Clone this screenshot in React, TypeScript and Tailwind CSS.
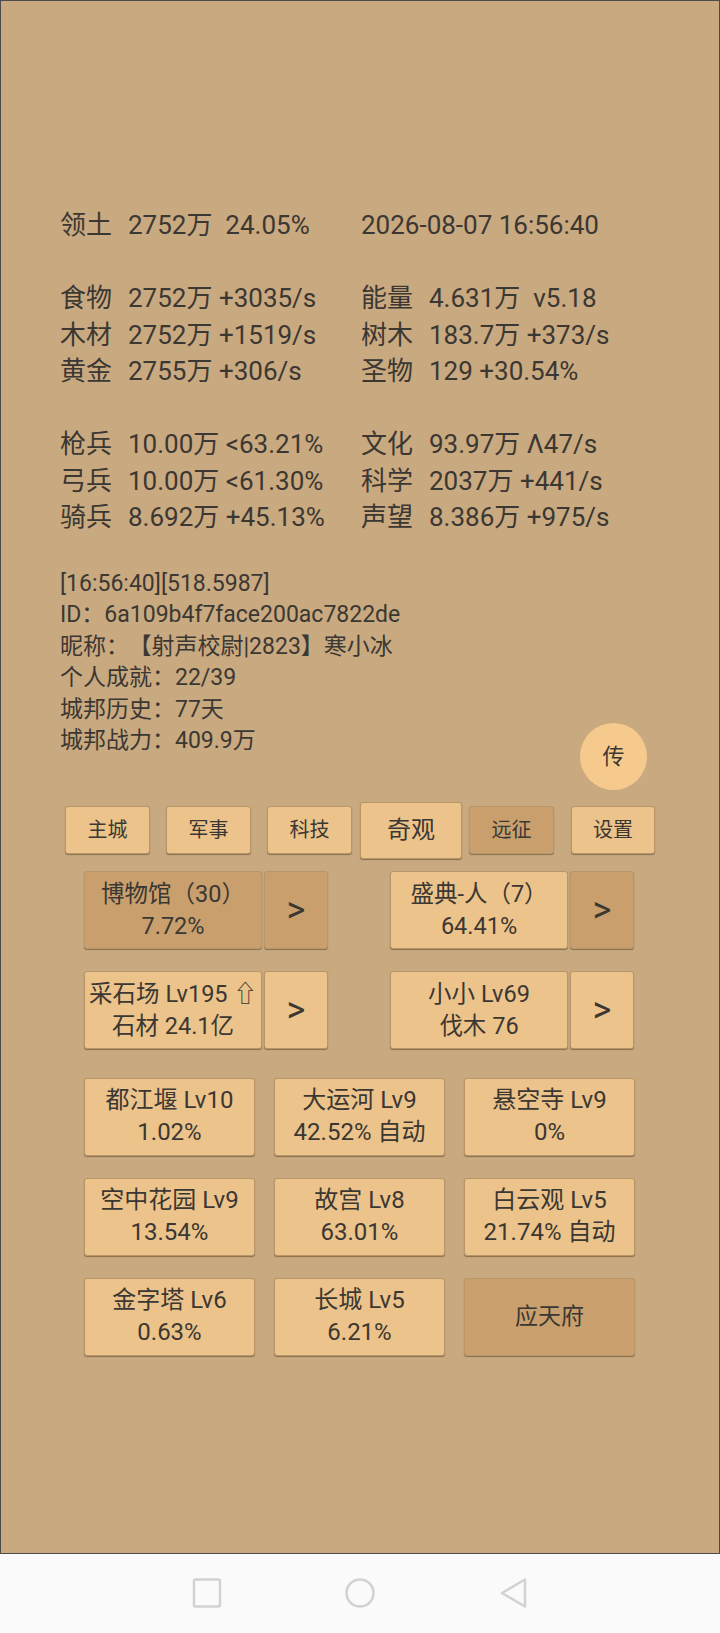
const stats: ([string, string, string, string] | null)[] = [
  ['领土', '2752万  24.05%', '', '2026-08-07 16:56:40'],
  null,
  ['食物', '2752万 +3035/s', '能量', '4.631万  v5.18'],
  ['木材', '2752万 +1519/s', '树木', '183.7万 +373/s'],
  ['黄金', '2755万 +306/s', '圣物', '129 +30.54%'],
  null,
  ['枪兵', '10.00万 <63.21%', '文化', '93.97万 Λ47/s'],
  ['弓兵', '10.00万 <61.30%', '科学', '2037万 +441/s'],
  ['骑兵', '8.692万 +45.13%', '声望', '8.386万 +975/s'],
];

const wonders: { title: string; sub?: string; dark?: boolean }[] = [
  { title: '都江堰 Lv10', sub: '1.02%' },
  { title: '大运河 Lv9', sub: '42.52% 自动' },
  { title: '悬空寺 Lv9', sub: '0%' },
  { title: '空中花园 Lv9', sub: '13.54%' },
  { title: '故宫 Lv8', sub: '63.01%' },
  { title: '白云观 Lv5', sub: '21.74% 自动' },
  { title: '金字塔 Lv6', sub: '0.63%' },
  { title: '长城 Lv5', sub: '6.21%' },
  { title: '应天府', dark: true },
];

const light = 'bg-[#ecc38a]';
const dark = 'bg-[#c9a06d]';
const btn =
  'flex flex-col items-center justify-center rounded-[3px] border border-[#b99668] shadow-[0_1px_1px_rgba(60,40,20,0.45)]';

function Tab({ label, w, ml, big, isDark }: { label: string; w: string; ml: string; big?: boolean; isDark?: boolean }) {
  return (
    <div
      className={`${btn} ${isDark ? dark : light} ${w} ${ml} ${big ? 'h-[57px] text-[24px]' : 'h-[48px] text-[20px]'}`}
    >
      {label}
    </div>
  );
}

function Arrow({ isDark }: { isDark?: boolean }) {
  return <div className={`${btn} ${isDark ? dark : light} ml-[2px] h-[78px] w-[64px] text-[36px]`}>&gt;</div>;
}

export default function App() {
  return (
    <div
      className="flex h-[1633px] w-[720px] flex-col bg-[#fafafa]"
      style={{ fontFamily: 'Roboto, "Noto Sans CJK SC", sans-serif' }}
    >
      <div className="relative h-[1554px] shrink-0 border border-[#4b4b4b] bg-[#c9a97f] text-[#3b3733]">
        <div className="pt-[206px] pl-[59px] text-[26px] leading-[36.5px] whitespace-pre">
          {stats.map((row, i) =>
            row ? (
              <div key={i} className="flex">
                <div className="flex w-[301px]">
                  <span className="w-[68px]">{row[0]}</span>
                  <span>{row[1]}</span>
                </div>
                <div className="flex">
                  {row[2] && <span className="w-[68px]">{row[2]}</span>}
                  <span>{row[3]}</span>
                </div>
              </div>
            ) : (
              <div key={i} className="h-[36.5px]" />
            ),
          )}
        </div>

        <div className="mt-[32px] pl-[59px] text-[23px] leading-[31.5px]">
          <div>[16:56:40][518.5987]</div>
          <div>ID：6a109b4f7face200ac7822de</div>
          <div>
            昵称：<span className="ml-[11px]">【射声校尉|2823】寒小冰</span>
          </div>
          <div>个人成就：22/39</div>
          <div>城邦历史：77天</div>
          <div>城邦战力：409.9万</div>
        </div>

        <div className="absolute top-[722px] left-[579px] flex h-[67px] w-[67px] items-center justify-center rounded-full bg-[#f6ca8c] text-[22px]">
          传
        </div>

        <div className="mt-[45px] flex h-[57px] items-center pl-[64px]">
          <Tab label="主城" w="w-[85px]" ml="ml-0" />
          <Tab label="军事" w="w-[85px]" ml="ml-[16px]" />
          <Tab label="科技" w="w-[85px]" ml="ml-[16px]" />
          <Tab label="奇观" w="w-[102px]" ml="ml-[8px]" big />
          <Tab label="远征" w="w-[85px]" ml="ml-[7px]" isDark />
          <Tab label="设置" w="w-[84px]" ml="ml-[17px]" />
        </div>

        <div className="mt-[12px] flex pl-[83px] text-[23.5px] leading-[32px]">
          <div className={`${btn} ${dark} h-[78px] w-[178px]`}>
            <span>博物馆（30）</span>
            <span>7.72%</span>
          </div>
          <Arrow isDark />
          <div className={`${btn} ${light} ml-[62px] h-[78px] w-[178px]`}>
            <span>盛典-人（7）</span>
            <span>64.41%</span>
          </div>
          <Arrow isDark />
        </div>

        <div className="mt-[22px] flex pl-[83px] text-[23.5px] leading-[32px]">
          <div className={`${btn} ${light} h-[78px] w-[178px] whitespace-nowrap`}>
            <span>采石场 Lv195 ⇧</span>
            <span>石材 24.1亿</span>
          </div>
          <Arrow />
          <div className={`${btn} ${light} ml-[62px] h-[78px] w-[178px]`}>
            <span>小小 Lv69</span>
            <span>伐木 76</span>
          </div>
          <Arrow />
        </div>

        <div className="mt-[29px] grid grid-cols-[171px_171px_171px] gap-x-[19px] gap-y-[22px] pl-[83px] text-[24px] leading-[31.5px]">
          {wonders.map((w) => (
            <div key={w.title} className={`${btn} ${w.dark ? dark : light} h-[78px] whitespace-nowrap`}>
              {w.sub ? (
                <>
                  <span>{w.title}</span>
                  <span>{w.sub}</span>
                </>
              ) : (
                <span className="text-[23px]">{w.title}</span>
              )}
            </div>
          ))}
        </div>
      </div>

      <div className="flex flex-1 items-center justify-center gap-[123px] pb-[1px]">
        <svg width="30" height="30" viewBox="0 0 30 30" fill="none" stroke="#d2d2d2" strokeWidth="2.5">
          <rect x="2" y="1.5" width="26" height="27" rx="1.5" />
        </svg>
        <svg width="30" height="30" viewBox="0 0 30 30" fill="none" stroke="#d2d2d2" strokeWidth="2.5">
          <circle cx="15" cy="15" r="13.5" />
        </svg>
        <svg width="30" height="30" viewBox="0 0 30 30" fill="none" stroke="#d2d2d2" strokeWidth="2.5" strokeLinejoin="round">
          <path d="M27 1.5 L4 15 L27 28.5 Z" />
        </svg>
      </div>
    </div>
  );
}
